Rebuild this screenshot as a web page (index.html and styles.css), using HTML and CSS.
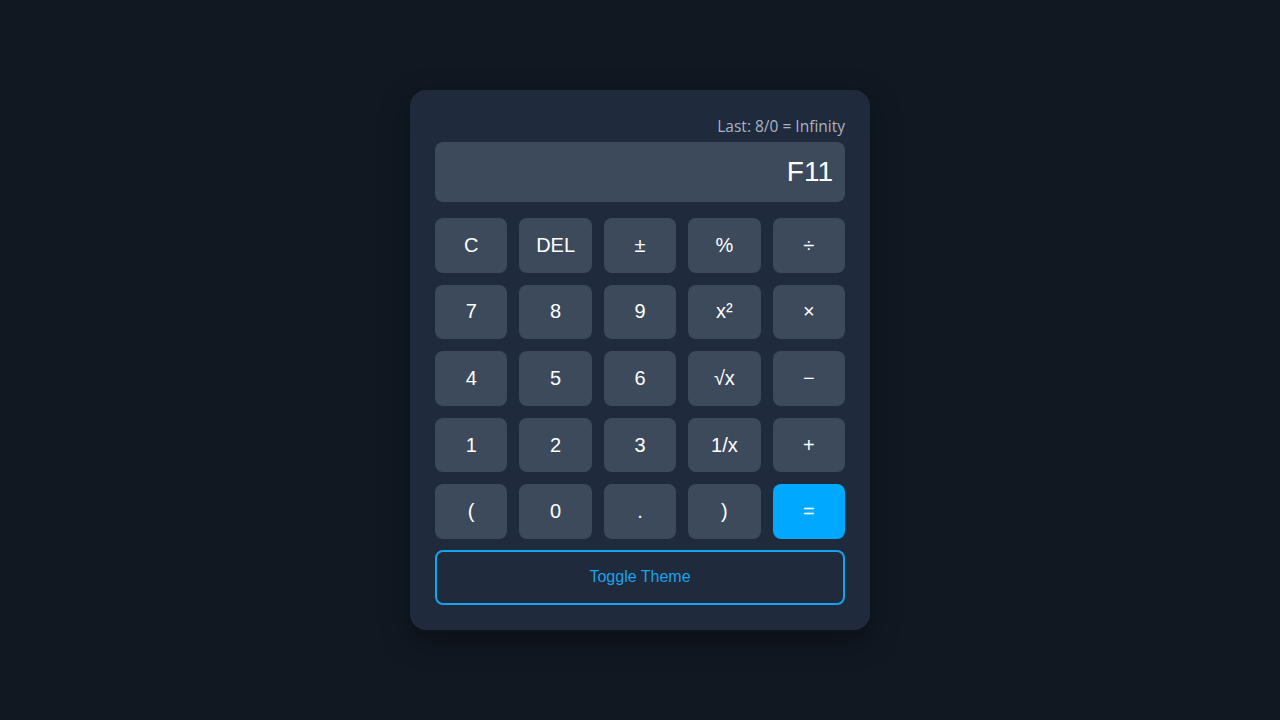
FILE: index.html
```html
<!DOCTYPE html>
<html>
<head>
<meta charset="utf-8">
<link rel="stylesheet" href="styles.css">
</head>
<body>
<div class="calc">
  <div class="last">Last: 8/0 = Infinity</div>
  <div class="display">F11</div>
  <div class="keys">
    <button class="key">C</button>
    <button class="key">DEL</button>
    <button class="key">±</button>
    <button class="key">%</button>
    <button class="key">÷</button>
    <button class="key">7</button>
    <button class="key">8</button>
    <button class="key">9</button>
    <button class="key">x²</button>
    <button class="key">×</button>
    <button class="key">4</button>
    <button class="key">5</button>
    <button class="key">6</button>
    <button class="key">√x</button>
    <button class="key">−</button>
    <button class="key">1</button>
    <button class="key">2</button>
    <button class="key">3</button>
    <button class="key">1/x</button>
    <button class="key">+</button>
    <button class="key">(</button>
    <button class="key">0</button>
    <button class="key">.</button>
    <button class="key">)</button>
    <button class="key equals">=</button>
  </div>
  <button class="toggle">Toggle Theme</button>
</div>
</body>
</html>
```
FILE: styles.css
```css
html, body {
  margin: 0;
  padding: 0;
  height: 100%;
}
body {
  background: #111821;
  display: flex;
  align-items: center;
  justify-content: center;
  font-family: "Liberation Sans", Arial, sans-serif;
}
.calc {
  width: 410px;
  padding: 25px;
  background: #1f2a3d;
  border-radius: 16px;
  box-shadow: 0 10px 30px rgba(0, 0, 0, 0.35);
  display: flex;
  flex-direction: column;
}
.last {
  text-align: right;
  font-family: "Open Sans", "Noto Sans", sans-serif;
  font-size: 15.5px;
  line-height: 22px;
  color: #aab3c0;
  margin-bottom: 5px;
}
.display {
  height: 60px;
  background: #3d4a5c;
  border-radius: 8px;
  display: flex;
  align-items: center;
  justify-content: flex-end;
  padding: 0 12px;
  font-size: 28px;
  color: #ffffff;
  margin-bottom: 16px;
}
.keys {
  display: grid;
  grid-template-columns: repeat(5, 1fr);
  grid-auto-rows: 54.6px;
  gap: 12px;
  margin-bottom: 11px;
}
.key {
  border: none;
  border-radius: 8px;
  background: #3d4a5c;
  color: #ffffff;
  font-family: "Liberation Sans", Arial, sans-serif;
  font-size: 20px;
  padding: 0;
}
.key.equals {
  background: #00a8ff;
}
.toggle {
  height: 55px;
  background: transparent;
  border: 2px solid #16a3ec;
  border-radius: 8px;
  color: #1ca3ea;
  font-family: "Liberation Sans", Arial, sans-serif;
  font-size: 16px;
}
```
